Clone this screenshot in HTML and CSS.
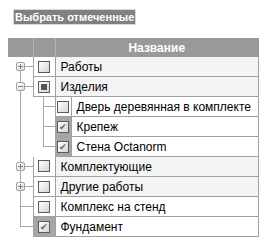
FILE: index.html
```html
<!DOCTYPE html>
<html>
<head>
<meta charset="utf-8">
<link rel="stylesheet" href="styles.css">
</head>
<body>
<div class="toolbar"><span class="btn">Выбрать отмеченные</span></div>
<table class="tree">
  <colgroup><col class="c1"><col class="c2"><col class="c3"><col class="c4"></colgroup>
  <tr class="head"><th></th><th></th><th colspan="2">Название</th></tr>
  <tr class="parent">
    <td class="t1 first"><span class="exp plus"></span></td>
    <td class="chk"><span class="box"></span></td>
    <td class="name" colspan="2">Работы</td>
  </tr>
  <tr class="parent">
    <td class="t1 mid"><span class="exp minus"></span></td>
    <td class="chk"><span class="box part"></span></td>
    <td class="name" colspan="2">Изделия</td>
  </tr>
  <tr class="leaf">
    <td class="t1 line"></td>
    <td class="t2 mid"></td>
    <td class="chk small"><span class="box"></span></td>
    <td class="name">Дверь деревянная в комплекте</td>
  </tr>
  <tr class="leaf">
    <td class="t1 line"></td>
    <td class="t2 mid"></td>
    <td class="chk small on"><span class="box"><span class="tick">✔</span></span></td>
    <td class="name">Крепеж</td>
  </tr>
  <tr class="leaf">
    <td class="t1 line"></td>
    <td class="t2 last"></td>
    <td class="chk small on"><span class="box"><span class="tick">✔</span></span></td>
    <td class="name">Стена Octanorm</td>
  </tr>
  <tr class="parent">
    <td class="t1 mid"><span class="exp plus"></span></td>
    <td class="chk"><span class="box"></span></td>
    <td class="name" colspan="2">Комплектующие</td>
  </tr>
  <tr class="parent">
    <td class="t1 mid"><span class="exp plus"></span></td>
    <td class="chk"><span class="box"></span></td>
    <td class="name" colspan="2">Другие работы</td>
  </tr>
  <tr class="leaf">
    <td class="t1 mid"></td>
    <td class="chk"><span class="box"></span></td>
    <td class="name" colspan="2">Комплекс на стенд</td>
  </tr>
  <tr class="leaf">
    <td class="t1 last"></td>
    <td class="chk on"><span class="box"><span class="tick">✔</span></span></td>
    <td class="name" colspan="2">Фундамент</td>
  </tr>
</table>
</body>
</html>
```

FILE: styles.css
```css
body {
  margin: 8px;
  font-family: "Liberation Sans", Arial, sans-serif;
  font-size: 12px;
  color: #000;
  background: #fff;
}
.toolbar {
  padding: 1px 0 0 5px;
  height: 29px;
}
.btn {
  display: inline-block;
  background: #808080;
  color: #fff;
  font-weight: bold;
  font-size: 11px;
  line-height: 14px;
  padding: 0 1px;
  border: 1px solid #d8d8d8;
}
table.tree {
  border-collapse: collapse;
  width: 251px;
  table-layout: fixed;
}
col.c1 { width: 25px; }
col.c2 { width: 22px; }
col.c3 { width: 16px; }
tr.head th {
  background: #999;
  color: #fff;
  font-weight: bold;
  height: 19px;
  padding: 0;
  border-left: 1px solid #b4b4b4;
  text-align: center;
}
tr.head th:first-child { border-left: none; }
tr.head th:last-child { border-right: 1px solid #999; }
td {
  padding: 0;
  height: 19px;
  vertical-align: middle;
}
tr.parent td.name { background: #f4f4f4; }
td.name {
  border-bottom: 1px solid #a0a0a0;
  border-right: 1px solid #a0a0a0;
  padding-left: 5px;
  white-space: nowrap;
}
td.chk {
  border: 1px solid #a0a0a0;
  border-top: none;
  text-align: center;
  line-height: 0;
}
td.chk.on { background: #a6a6a6; }
.box {
  display: inline-block;
  position: relative;
  box-sizing: border-box;
  width: 12px;
  height: 12px;
  border: 1px solid #5a5a5a;
  background: linear-gradient(135deg, #fff, #d4d4d4);
}
.box.part::after {
  content: "";
  position: absolute;
  left: 2px; top: 2px;
  width: 6px; height: 6px;
  background: #555;
}
.tick {
  position: absolute;
  left: 1px; top: 5px;
  font-size: 9px;
  line-height: 0;
  color: #666;
}
td.t1, td.t2 {
  text-align: left;
  line-height: 0;
  background-repeat: no-repeat;
}
td.t1 { --x: 12px; --w: 13px; }
td.t2 { --x: 10px; --w: 12px; }
td.first {
  background-image: linear-gradient(#a8a8a8, #a8a8a8), linear-gradient(#a8a8a8, #a8a8a8);
  background-position: var(--x) 100%, var(--x) 50%;
  background-size: 1px 50%, var(--w) 1px;
}
td.mid {
  background-image: linear-gradient(#a8a8a8, #a8a8a8), linear-gradient(#a8a8a8, #a8a8a8);
  background-position: var(--x) 0, var(--x) 50%;
  background-size: 1px 100%, var(--w) 1px;
}
td.last {
  background-image: linear-gradient(#a8a8a8, #a8a8a8), linear-gradient(#a8a8a8, #a8a8a8);
  background-position: var(--x) 0, var(--x) 50%;
  background-size: 1px 50%, var(--w) 1px;
}
td.line {
  background-image: linear-gradient(#a8a8a8, #a8a8a8);
  background-position: var(--x) 0;
  background-size: 1px 100%;
}
.exp {
  display: inline-block;
  position: relative;
  box-sizing: border-box;
  width: 9px;
  height: 9px;
  margin-left: 8px;
  border: 1px solid #a0a0a0;
  border-radius: 2px;
  background: linear-gradient(135deg, #fff, #ddd);
}
.exp::before {
  content: "";
  position: absolute;
  left: 1px; top: 3px;
  width: 5px; height: 1px;
  background: #808080;
}
.exp.plus::after {
  content: "";
  position: absolute;
  left: 3px; top: 1px;
  width: 1px; height: 5px;
  background: #808080;
}
```
